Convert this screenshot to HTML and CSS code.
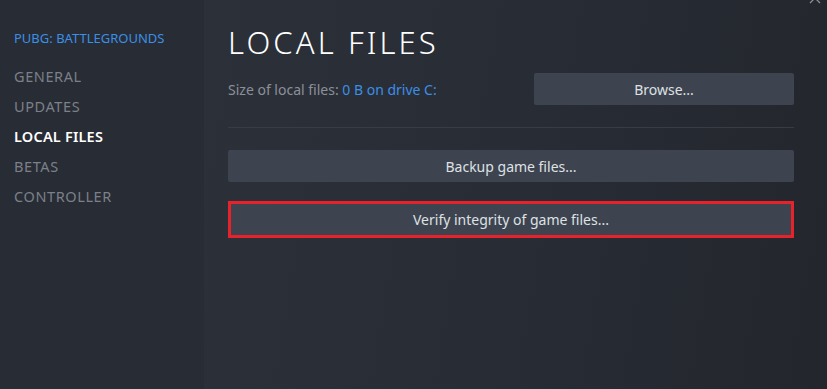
FILE: index.html
```html
<!DOCTYPE html>
<html lang="en">
<head>
<meta charset="utf-8">
<title>Properties - Local Files</title>
<link rel="stylesheet" href="styles.css">
</head>
<body>
<div class="window">
  <nav class="sidebar">
    <div class="game-title">PUBG: BATTLEGROUNDS</div>
    <ul class="nav">
      <li class="nav-item">GENERAL</li>
      <li class="nav-item">UPDATES</li>
      <li class="nav-item active">LOCAL FILES</li>
      <li class="nav-item">BETAS</li>
      <li class="nav-item">CONTROLLER</li>
    </ul>
  </nav>
  <main class="content">
    <svg class="close" width="12" height="12" viewBox="0 0 12 12"><path d="M1 1 L11 11 M11 1 L1 11" stroke="#8a909a" stroke-width="1.3" fill="none"/></svg>
    <h1 class="title">LOCAL FILES</h1>
    <div class="size-row">
      <div class="size-text">Size of local files: <span class="link">0 B on drive C:</span></div>
      <button class="btn browse">Browse...</button>
    </div>
    <div class="divider"></div>
    <button class="btn wide">Backup game files...</button>
    <div class="highlight">
      <button class="btn wide inner">Verify integrity of game files...</button>
    </div>
  </main>
</div>
</body>
</html>
```
FILE: styles.css
```css
html, body {
  margin: 0;
  padding: 0;
  width: 827px;
  height: 389px;
  overflow: hidden;
  background: #262a32;
  font-family: "Noto Sans", "Open Sans", Arial, sans-serif;
}
.window {
  display: flex;
  width: 827px;
  height: 389px;
}
.sidebar {
  width: 204px;
  flex: none;
  background: #282c35;
  padding: 30px 0 0 14px;
  box-sizing: border-box;
}
.game-title {
  color: #3b8fe6;
  font-size: 13px;
  line-height: 17px;
}
.nav {
  list-style: none;
  margin: 19px 0 0 0;
  padding: 0;
  display: flex;
  flex-direction: column;
  gap: 10px;
}
.nav-item {
  color: #7b8089;
  font-size: 14.5px;
  line-height: 20px;
  letter-spacing: 0.6px;
}
.nav-item.active {
  color: #ffffff;
  font-weight: 600;
  letter-spacing: 0.2px;
}
.content {
  position: relative;
  flex: 1;
  background: linear-gradient(100deg, #2c3039 0%, #282c35 50%, #23262c 100%);
  padding: 22px 33px 0 24px;
  box-sizing: border-box;
  display: flex;
  flex-direction: column;
}
.close {
  position: absolute;
  right: 6px;
  top: -8px;
}
.title {
  margin: 0;
  color: #ffffff;
  font-weight: 300;
  font-size: 31px;
  line-height: 40px;
  letter-spacing: 3.1px;
}
.size-row {
  display: flex;
  align-items: center;
  justify-content: space-between;
  margin-top: 11px;
}
.size-text {
  color: #8b9098;
  font-size: 14px;
}
.link {
  color: #3b8fe6;
}
.btn {
  border: none;
  background: #3d4450;
  color: #dfe1e3;
  font-family: "Noto Sans", "Open Sans", Arial, sans-serif;
  font-size: 14px;
  border-radius: 2px;
  padding: 0;
  cursor: pointer;
}
.browse {
  width: 260px;
  height: 32px;
}
.divider {
  height: 1px;
  background: #373c45;
  margin-top: 22px;
}
.wide {
  width: 566px;
  height: 32px;
  margin-top: 22px;
}
.highlight {
  margin-top: 19px;
  width: 566px;
  height: 37px;
  box-sizing: border-box;
  border: 3px solid #e8222a;
  display: flex;
}
.highlight .inner {
  margin: 0;
  width: 100%;
  height: 100%;
  border-radius: 0;
}
```
